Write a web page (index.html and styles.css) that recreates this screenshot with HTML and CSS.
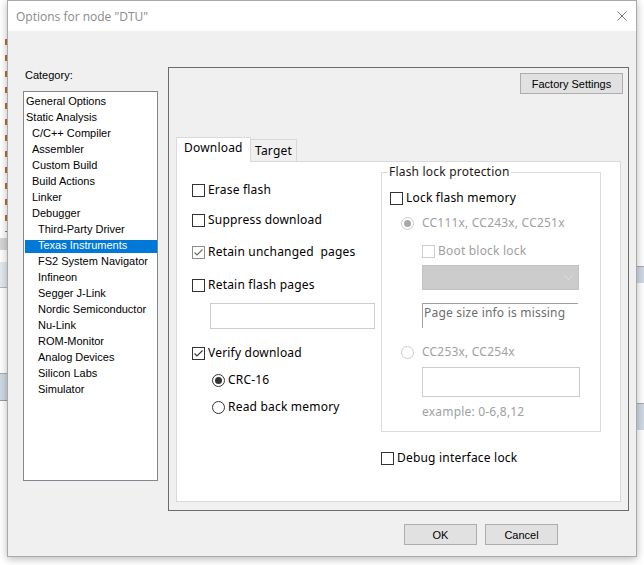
FILE: index.html
```html
<!DOCTYPE html>
<html>
<head>
<meta charset="utf-8">
<title>Options for node "DTU"</title>
<link rel="stylesheet" href="styles.css">
</head>
<body>
<div class="bg bg-l-marks"></div>
<div class="bg bg-l-band1"></div>
<div class="bg bg-l-band2"></div>
<div class="bg bg-l-band3"></div>
<div class="bg bg-r-band1"></div>
<div class="bg bg-r-band2"></div>

<div class="dialog">
  <div class="titlebar">
    <span class="title">Options for node "DTU"</span>
    <svg class="close" width="10" height="10" viewBox="0 0 10 10"><path d="M0.5 0.5 L9.5 9.5 M9.5 0.5 L0.5 9.5" stroke="#7a7a7a" stroke-width="1" fill="none"/></svg>
  </div>
  <div class="body">
    <div class="main">
      <div class="catcol">
        <div class="catlabel">Category:</div>
        <ul class="catlist">
          <li class="l0">General Options</li>
          <li class="l0">Static Analysis</li>
          <li class="l1">C/C++ Compiler</li>
          <li class="l1">Assembler</li>
          <li class="l1">Custom Build</li>
          <li class="l1">Build Actions</li>
          <li class="l1">Linker</li>
          <li class="l1">Debugger</li>
          <li class="l2">Third-Party Driver</li>
          <li class="l2 sel">Texas Instruments</li>
          <li class="l2">FS2 System Navigator</li>
          <li class="l2">Infineon</li>
          <li class="l2">Segger J-Link</li>
          <li class="l2">Nordic Semiconductor</li>
          <li class="l2">Nu-Link</li>
          <li class="l2">ROM-Monitor</li>
          <li class="l2">Analog Devices</li>
          <li class="l2">Silicon Labs</li>
          <li class="l2">Simulator</li>
        </ul>
      </div>
      <div class="panel">
        <div class="panel-top"><div class="btn factory">Factory Settings</div></div>
        <div class="tabs">
          <div class="tabstrip">
            <div class="tab active">Download</div>
            <div class="tab inactive">Target</div>
          </div>
          <div class="page">
            <div class="leftcol">
              <div class="row r-erase"><span class="cb"></span><span>Erase flash</span></div>
              <div class="row r-suppress"><span class="cb"></span><span>Suppress download</span></div>
              <div class="row r-retain"><span class="cb cb-gray"><svg width="11" height="11" viewBox="0 0 11 11"><polyline points="1.5,5.5 4,8 9.5,2.5" fill="none" stroke="#6a6a6a" stroke-width="1.1"/></svg></span><span>Retain unchanged&nbsp; pages</span></div>
              <div class="row r-retflash"><span class="cb"></span><span>Retain flash pages</span></div>
              <div class="field f-pages"></div>
              <div class="row r-verify"><span class="cb"><svg width="11" height="11" viewBox="0 0 11 11"><polyline points="1.5,5.5 4,8 9.5,2.5" fill="none" stroke="#333" stroke-width="1.1"/></svg></span><span>Verify download</span></div>
              <div class="row r-crc"><span class="rb on"></span><span>CRC-16</span></div>
              <div class="row r-read"><span class="rb"></span><span>Read back memory</span></div>
            </div>
            <div class="rightcol">
              <fieldset class="group">
                <legend>Flash lock protection</legend>
                <div class="row g-lock"><span class="cb"></span><span>Lock flash memory</span></div>
                <div class="row g-r1 dis"><span class="rb rb-dis on"></span><span>CC111x, CC243x, CC251x</span></div>
                <div class="row g-boot dis"><span class="cb cb-dis"></span><span>Boot block lock</span></div>
                <div class="combo"><svg width="9" height="5" viewBox="0 0 9 5"><polyline points="0.5,0.5 4.5,4.5 8.5,0.5" fill="none" stroke="#dedede" stroke-width="1"/></svg></div>
                <div class="static">Page size info is missing</div>
                <div class="row g-r2 dis"><span class="rb rb-dis"></span><span>CC253x, CC254x</span></div>
                <div class="field f-ranges"></div>
                <div class="row g-example dis">example: 0-6,8,12</div>
              </fieldset>
              <div class="row r-debug"><span class="cb"></span><span>Debug interface lock</span></div>
            </div>
          </div>
        </div>
      </div>
    </div>
    <div class="buttons">
      <div class="btn dlg-btn">OK</div>
      <div class="btn dlg-btn">Cancel</div>
    </div>
  </div>
</div>
</body>
</html>
```
FILE: styles.css
```css
* { box-sizing: border-box; }
html, body { margin: 0; padding: 0; }
body {
  width: 644px;
  height: 565px;
  position: relative;
  overflow: hidden;
  background: #ffffff;
  font-family: "Liberation Sans", Arial, sans-serif;
  font-size: 11px;
  color: #000;
}

/* IDE behind the dialog */
.bg { position: absolute; }
.bg-l-marks {
  left: 5px; top: 36px; width: 2px; height: 196px;
  background: repeating-linear-gradient(to bottom, transparent 0 3px, #b8702a 3px 9px, transparent 9px 16px);
}
.bg-l-band1 { left: 0; top: 238px; width: 7px; height: 12px; background: #d6d6d6; }
.bg-l-band2 { left: 0; top: 262px; width: 7px; height: 26px; background: #e3e9f0; border-bottom: 1px solid #b9b9b9; }
.bg-l-band3 { left: 0; top: 373px; width: 7px; height: 28px; background: #cfd9e4; border-top: 1px solid #aaaaaa; border-bottom: 1px solid #9a9a9a; }
.bg-r-band1 { left: 636px; top: 266px; width: 8px; height: 17px; background: #cfd9e4; border-top: 1px solid #aaaaaa; }
.bg-r-band2 { left: 636px; top: 403px; width: 8px; height: 27px; background: #cfd9e4; border-top: 1px solid #aaaaaa; }

.dialog {
  position: absolute;
  left: 7px;
  top: 0;
  width: 630px;
  height: 557px;
  border: 1px solid #a9a9a9;
  background: #f0f0f0;
  box-shadow: 0 2px 8px rgba(0, 0, 0, 0.28);
  display: flex;
  flex-direction: column;
}
.titlebar {
  height: 30px;
  flex: none;
  background: #ffffff;
  display: flex;
  align-items: center;
  justify-content: space-between;
  padding: 0 9px 0 8px;
}
.title {
  font-family: "Open Sans", "Noto Sans", sans-serif;
  font-size: 12px;
  color: #8a8a8a;
}
.close { display: block; }

.body {
  flex: 1;
  padding: 36px 0 0 15px;
}
.main { display: flex; gap: 10px; }

.catcol { width: 135px; flex: none; }
.catlabel { line-height: 16px; height: 16px; padding-left: 2px; }
.catlist {
  list-style: none;
  margin: 8px 0 0;
  padding: 1px 0 0;
  height: 390px;
  border: 1px solid #828790;
  background: #ffffff;
}
.catlist li { height: 16px; line-height: 16px; white-space: nowrap; }
.l0 { padding-left: 2px; }
.l1 { padding-left: 8px; }
.l2 { padding-left: 14px; }
.catlist li.sel {
  margin-left: 1px;
  padding-left: 13px;
  color: #ffffff;
  background: linear-gradient(to bottom, #ffffff 0 3px, #0078d7 3px 16px);
}

.panel {
  width: 461px;
  height: 444px;
  flex: none;
  border: 1px solid #6b6b6b;
}
.panel-top { display: flex; justify-content: flex-end; padding: 5px 5px 0 0; }

.btn {
  height: 21px;
  border: 1px solid #adadad;
  background: #e1e1e1;
  display: flex;
  align-items: center;
  justify-content: center;
  font-family: "Liberation Sans", Arial, sans-serif;
  font-size: 11px;
  color: #000;
}
.factory { width: 103px; }

.tabs { margin: 43px 7px 0; }
.tabstrip { display: flex; align-items: flex-end; height: 24px; }
.tab {
  font-family: "Noto Sans", sans-serif;
  font-size: 12px;
  line-height: 16px;
  letter-spacing: 0.2px;
  border: 1px solid #d9d9d9;
  border-bottom: none;
  white-space: nowrap;
}
.tab.active {
  width: 75px;
  height: 25px;
  margin-bottom: -1px;
  padding: 2px 0 0 7px;
  background: #ffffff;
  position: relative;
  z-index: 1;
}
.tab.inactive {
  width: 46px;
  height: 22px;
  border-left: none;
  padding: 3px 0 0 4px;
  background: #f0f0f0;
}
.page {
  height: 341px;
  border: 1px solid #d9d9d9;
  background: #ffffff;
  display: flex;
  font-family: "Noto Sans", sans-serif;
  font-size: 12px;
  letter-spacing: 0.2px;
  color: #000;
}

.row {
  display: flex;
  align-items: center;
  height: 16px;
  line-height: 16px;
  white-space: nowrap;
}
.cb {
  width: 13px;
  height: 13px;
  flex: none;
  border: 1px solid #333333;
  background: #ffffff;
  margin-right: 3px;
  display: flex;
  align-items: center;
  justify-content: center;
}
.cb svg { display: block; }
.cb-gray { border-color: #8c8c8c; }
.cb-dis { border-color: #cccccc; }
.rb {
  width: 13px;
  height: 13px;
  flex: none;
  border: 1px solid #333333;
  border-radius: 50%;
  background: #ffffff;
  margin-right: 3px;
  display: flex;
  align-items: center;
  justify-content: center;
}
.rb.on::after {
  content: "";
  width: 7px;
  height: 7px;
  border-radius: 50%;
  background: #333333;
}
.rb-dis { border-color: #cccccc; margin-right: 8px; }
.rb-dis.on::after { background: #a8a8a8; }
.dis { color: #a0a0a0; }

.leftcol { width: 204px; flex: none; padding: 20px 0 0 15px; }
.r-suppress { margin-top: 14px; }
.r-retain { margin-top: 16px; }
.r-retflash { margin-top: 17px; }
.field { border: 1px solid #cccccc; background: #ffffff; }
.f-pages { margin: 10px 0 0 18px; width: 165px; height: 26px; }
.r-verify { margin-top: 16px; }
.r-crc { margin: 11px 0 0 20px; }
.r-read { margin: 11px 0 0 20px; }

.rightcol { flex: none; width: 239px; padding-top: 2px; }
.group {
  width: 220px;
  margin: 0;
  padding: 0 0 11px;
  min-width: 0;
  border: 1px solid #dcdcdc;
}
.group legend {
  margin-left: 6px;
  padding: 0 1px;
  height: 16px;
  line-height: 16px;
  color: #1a1a1a;
}
.g-lock { margin: 10px 0 0 8px; }
.g-r1 { margin: 9px 0 0 19px; }
.g-boot { margin: 12px 0 0 40px; }
.combo {
  margin: 6px 0 0 40px;
  width: 157px;
  height: 25px;
  border: 1px solid #c2c2c2;
  background: #cccccc;
  display: flex;
  align-items: center;
  justify-content: flex-end;
  padding-right: 5px;
}
.combo svg { display: block; }
.static {
  margin: 13px 0 0 40px;
  width: 156px;
  height: 25px;
  border-top: 1px solid #a0a0a0;
  border-left: 1px solid #a0a0a0;
  padding: 1px 0 0 1px;
  line-height: 16px;
  color: #6d6d6d;
  white-space: nowrap;
}
.g-r2 { margin: 16px 0 0 19px; }
.f-ranges { margin: 7px 0 0 40px; width: 158px; height: 30px; }
.g-example { margin: 7px 0 0 40px; }
.r-debug { margin-top: 18px; }

.buttons {
  display: flex;
  justify-content: flex-end;
  gap: 8px;
  margin-top: 13px;
  padding-right: 78px;
}
.dlg-btn { width: 73px; }
```
